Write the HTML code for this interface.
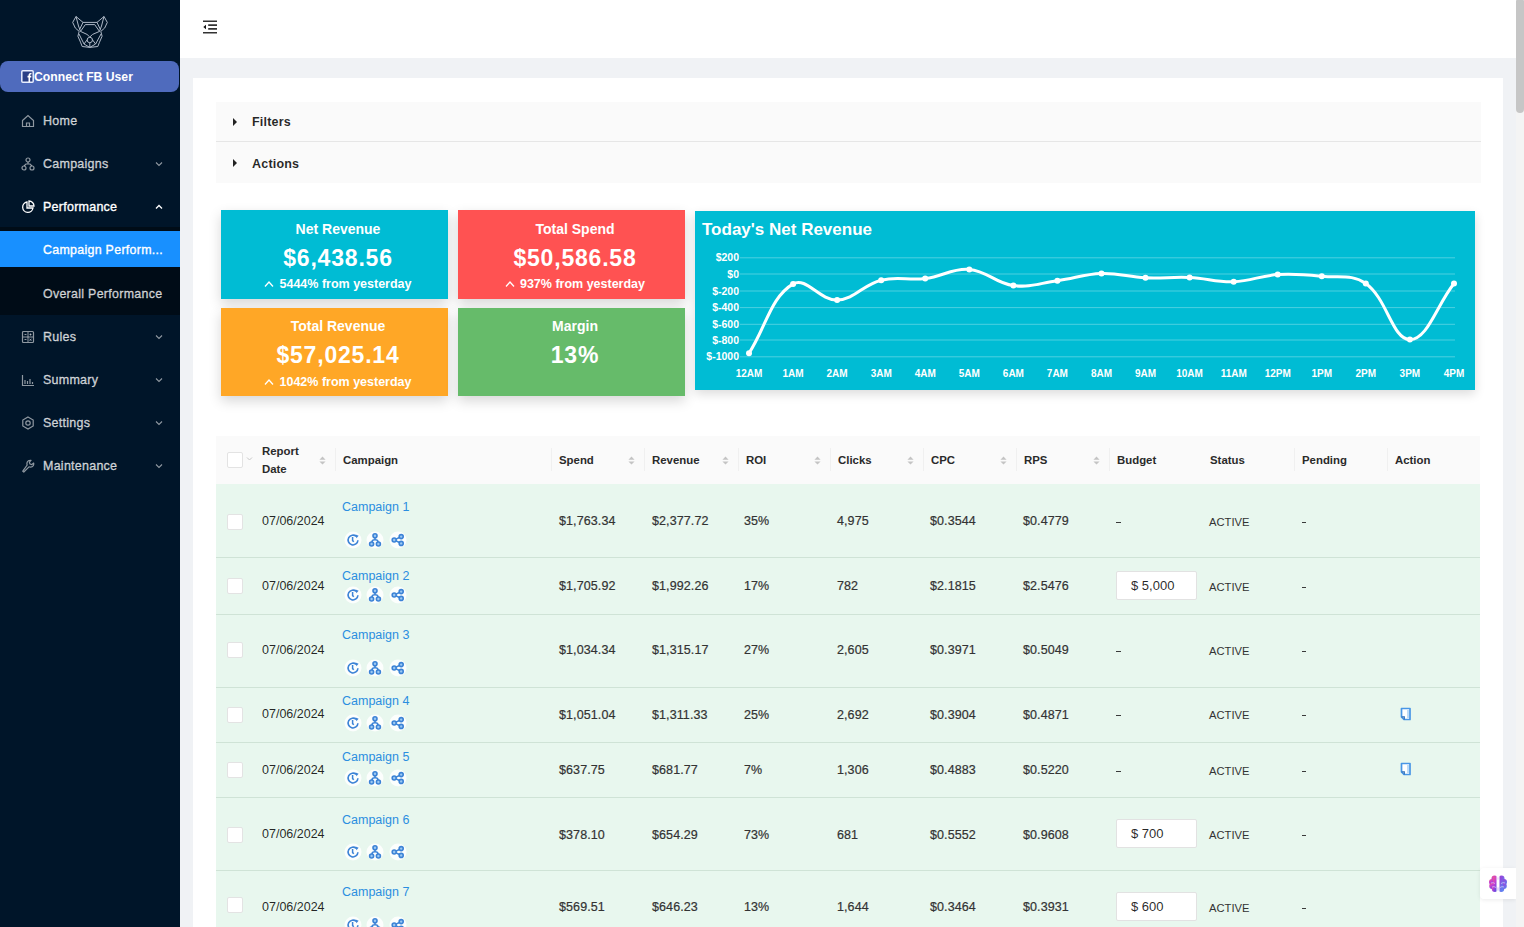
<!DOCTYPE html>
<html><head><meta charset="utf-8">
<style>
*{box-sizing:border-box;margin:0;padding:0}
html,body{width:1524px;height:927px;overflow:hidden;background:#f0f2f5;font-family:"Liberation Sans",sans-serif;color:rgba(0,0,0,.85)}
.abs{position:absolute}
#side{position:absolute;left:0;top:0;width:180px;height:927px;background:#001529}
#fb{position:absolute;left:0;top:61px;width:179px;height:31px;background:#4f6bbd;border-radius:8px;color:#fff;font-size:12.2px;font-weight:bold;line-height:33px;padding-left:21px}
.mi{position:absolute;left:0;width:180px;height:40px;line-height:42px;color:rgba(255,255,255,.72);font-size:12.5px;font-weight:normal;letter-spacing:.25px;-webkit-text-stroke:.35px currentColor}
.mi svg{-webkit-text-stroke:0}
.mi .ic,.mi .ar{opacity:.78}
.mi.on .ic,.mi.on .ar{opacity:1}
.mi .ic{position:absolute;left:21px;top:14px;width:14px;height:14px}
.mi .tx{position:absolute;left:43px}
.mi .sx{font-size:12.4px;letter-spacing:.3px}
.mi .ar{position:absolute;left:154px;top:16px;width:10px;height:10px}
#sub{position:absolute;left:0;top:227px;width:180px;height:88px;background:#000c17}
#header{position:absolute;left:180px;top:0;width:1336px;height:58px;background:#fff}
#card{position:absolute;left:193px;top:78px;width:1310px;height:849px;background:#fff}
.coll{position:absolute;left:216px;width:1265px;background:#fafafa;font-size:12.5px;font-weight:bold;letter-spacing:.2px;color:rgba(0,0,0,.85)}
.coll .tri{position:absolute;left:17px;width:0;height:0;border-left:4px solid #222;border-top:4px solid transparent;border-bottom:4px solid transparent}
.coll .t{position:absolute;left:36px}
.stat{position:absolute;color:#fff;text-align:center;box-shadow:0 5px 12px rgba(0,0,0,.16)}
.stat.r2 .h{top:10px}.stat.r2 .v{top:33.5px}
.stat .h{position:absolute;left:7px;right:0;top:11px;font-size:14px;font-weight:bold}
.stat .v{position:absolute;left:7px;right:0;top:35px;font-size:23px;line-height:26px;font-weight:bold;letter-spacing:.8px}
.stat .f{position:absolute;left:7px;right:0;top:67px;font-size:12.5px;font-weight:bold}
.cb{position:absolute;width:16px;height:16px;background:#fff;border:1px solid #e3e3e3;border-radius:2px}
.dv{position:absolute;top:448px;width:1px;height:23px;background:#f0f0f0}
.th{position:absolute;font-size:11.4px;font-weight:bold;color:#2a2a2a;line-height:16px;white-space:nowrap}
.so{position:absolute;top:455.5px;width:7px;height:9px;fill:#c4c4c4}
.td{position:absolute;font-size:12.5px;color:rgba(0,0,0,.85);line-height:15px;white-space:nowrap}
.n{color:#333;letter-spacing:.1px;-webkit-text-stroke:.2px #333}
.dash{position:absolute;width:4.5px;height:1.4px;background:#3a3a3a}
.st{font-size:11.2px;color:#333}
.lk{position:absolute;font-size:12.5px;color:#2b8ee0;line-height:15px;white-space:nowrap}
.ri{position:absolute;width:18px;height:18px}
.ai{position:absolute;width:12px;height:14px}
.inp{position:absolute;width:81px;height:29px;background:#fff;border:1px solid #e2e2e2;border-radius:2px;font-size:13px;line-height:27px;padding-left:14px;color:rgba(0,0,0,.85)}
#scroll{position:absolute;left:1516px;top:0;width:8px;height:927px;background:#f4f4f4}
#thumb{position:absolute;left:1516px;top:0;width:8px;height:113px;background:#c6c6c6;border-radius:1px 1px 4px 4px}
</style></head><body>
<svg width="0" height="0" style="position:absolute"><defs>
<symbol id="hist" viewBox="0 0 18 18"><circle cx="9" cy="9" r="8.5" fill="rgba(255,255,255,.85)"/><path d="M13.9 9.2 A4.9 4.9 0 1 1 12.3 5.4" fill="none" stroke="#3c83d6" stroke-width="1.6"/><path d="M11.6 3.6 L14.6 4.8 L12.4 7.2 Z" fill="#3c83d6"/><path d="M8.6 6 V9.6 L9.8 10.8" fill="none" stroke="#3c83d6" stroke-width="1.5"/></symbol>
<symbol id="tree" viewBox="0 0 18 18"><circle cx="9" cy="9" r="8.5" fill="rgba(255,255,255,.85)"/><g fill="#9cc8f2" stroke="#3c83d6" stroke-width="1.6"><circle cx="9" cy="4.8" r="2"/><circle cx="5.6" cy="13" r="2"/><circle cx="12.4" cy="13" r="2"/></g><path d="M9 6.8 V8.8 M6 11 Q6 8.8 9 8.8 Q12 8.8 12 11" fill="none" stroke="#3c83d6" stroke-width="1.6"/></symbol>
<symbol id="share" viewBox="0 0 18 18"><circle cx="9" cy="9" r="8.5" fill="rgba(255,255,255,.85)"/><g fill="#9cc8f2" stroke="#3c83d6" stroke-width="1.6"><circle cx="5.2" cy="9" r="2"/><circle cx="12.2" cy="5.6" r="2"/><circle cx="12.2" cy="12.4" r="2"/></g><path d="M7 8.1 L10.4 6.5 M7 9.9 L10.4 11.5" fill="none" stroke="#3c83d6" stroke-width="1.6"/></symbol>
<symbol id="copy" viewBox="0 0 12 14"><path d="M1.5 1.5 H10 V12.5 H4 L1.5 10 Z" fill="#fff" stroke="#4896e6" stroke-width="1.7" stroke-linejoin="round"/><path d="M8 3 V11" stroke="#a9d0f5" stroke-width="1.5"/><path d="M4.3 12.5 V9.8 H1.6" fill="none" stroke="#2f6fb8" stroke-width="1.2"/></symbol>
</defs></svg>
<div id="side">
  <svg class="abs" style="left:60px;top:5px" width="60" height="50" viewBox="60 5 60 50" fill="none" stroke="#aeb8c6" stroke-width="1" stroke-linejoin="round">
    <path d="M76 16.5 L72.7 22.4 L75.3 28 L79.2 31.4 L77.9 36.2 L80.5 42.2 L82.2 46.5 L89.8 47.4 L97.8 46.5 L99.5 42.2 L102.1 36.2 L100.8 31.4 L104.7 28 L107.3 22.4 L104 16.5 L97 22.4 L83 22.4 Z"/>
    <path d="M76 16.5 L78.5 26 L80.5 31.4 M104 16.5 L101.5 26 L99.5 31.4 M83 22.4 L79.6 29.5 M97 22.4 L100.4 29.5 M85.3 24.6 H94.7 M85.3 24.6 L80.5 31.4 M94.7 24.6 L99.5 31.4 M80.5 31.4 L87 34.4 L89.8 37 L92.6 34.4 L99.5 31.4 M79 34 L84 44 L89.8 47.4 L95.6 44 L101 34 M84 44 L87.3 39.6 M95.6 44 L92.3 39.6"/>
    <circle cx="89.8" cy="40" r="2.7"/><path d="M89.8 42.7 V47"/>
  </svg>
  <div id="fb"><svg width="13" height="13" viewBox="0 0 13 13" style="vertical-align:-2px;margin-right:0px"><rect x="0.8" y="0.8" width="11.4" height="11.4" rx="1" fill="#2a3f86" stroke="#e8eeff" stroke-width="1.5"/><path d="M8.3 12 V5.5 Q8.3 3.5 10.5 3.5 M6.5 6.6 H10.3" fill="none" stroke="#fff" stroke-width="1.6"/></svg>Connect FB User</div>
</div>
<div id="sub"></div>
<div class="abs" style="left:0;top:231px;width:180px;height:36px;background:#1890ff"></div>

<div class="mi" style="top:100px"><svg class="ic" viewBox="0 0 14 14" fill="none" stroke="currentColor" stroke-width="1.2"><path d="M1.5 6.5 L7 1.5 L12.5 6.5 V12.5 H1.5 Z M5.5 12.5 V9 H8.5 V12.5"/></svg><span class="tx">Home</span></div>
<div class="mi" style="top:143px"><svg class="ic" viewBox="0 0 14 14" fill="none" stroke="currentColor" stroke-width="1.2"><circle cx="7" cy="3" r="2"/><circle cx="3" cy="11" r="2"/><circle cx="11" cy="11" r="2"/><path d="M7 5 V7 M3 9 L5 7 H9 L11 9"/></svg><span class="tx">Campaigns</span><svg class="ar" viewBox="0 0 10 10" fill="none" stroke="currentColor" stroke-width="1.1"><path d="M2 3.5 L5 6.5 L8 3.5"/></svg></div>
<div class="mi on" style="top:186px;color:#fff"><svg class="ic" viewBox="0 0 14 14" fill="none" stroke="currentColor" stroke-width="1.3"><path d="M6 2 A5.2 5.2 0 1 0 12 8 H6 Z"/><path d="M8 1 A5 5 0 0 1 13 6 H8 Z"/></svg><span class="tx">Performance</span><svg class="ar" viewBox="0 0 10 10" fill="none" stroke="currentColor" stroke-width="1.3"><path d="M2 6.5 L5 3.5 L8 6.5"/></svg></div>
<div class="mi" style="top:229px;color:#fff"><span class="tx sx">Campaign Perform...</span></div>
<div class="mi" style="top:273px"><span class="tx sx">Overall Performance</span></div>
<div class="mi" style="top:316px"><svg class="ic" viewBox="0 0 14 14" fill="none" stroke="currentColor" stroke-width="1.2"><rect x="1.5" y="1.5" width="11" height="11" rx="1"/><path d="M7 2 V12 M2 7 H12 M3.5 4.5 H5.5 M8.5 4.5 H10.5 M9.5 3.5 V5.5 M3.5 9.5 H5.5 M8.5 9 L10.5 10.5 M10.5 9 L8.5 10.5" stroke-width="1"/></svg><span class="tx">Rules</span><svg class="ar" viewBox="0 0 10 10" fill="none" stroke="currentColor" stroke-width="1.1"><path d="M2 3.5 L5 6.5 L8 3.5"/></svg></div>
<div class="mi" style="top:359px"><svg class="ic" viewBox="0 0 14 14" fill="none" stroke="currentColor" stroke-width="1.2"><path d="M1.5 2 V12.5 H13 M4 11 V7 M6.5 11 V8 M9 11 V6 M11.5 11 V9"/></svg><span class="tx">Summary</span><svg class="ar" viewBox="0 0 10 10" fill="none" stroke="currentColor" stroke-width="1.1"><path d="M2 3.5 L5 6.5 L8 3.5"/></svg></div>
<div class="mi" style="top:402px"><svg class="ic" viewBox="0 0 14 14" fill="none" stroke="currentColor" stroke-width="1.2"><path d="M7 1 L12.2 4 V10 L7 13 L1.8 10 V4 Z"/><circle cx="7" cy="7" r="2.2"/></svg><span class="tx">Settings</span><svg class="ar" viewBox="0 0 10 10" fill="none" stroke="currentColor" stroke-width="1.1"><path d="M2 3.5 L5 6.5 L8 3.5"/></svg></div>
<div class="mi" style="top:445px"><svg class="ic" viewBox="0 0 14 14" fill="none" stroke="currentColor" stroke-width="1.2" stroke-linejoin="round"><path d="M1.8 12.2 L2.8 13 L8 7.8 Q10.8 8.8 12.3 6.6 Q13 5.2 12.6 4 L10.8 5.6 L9 5 L8.4 3.2 L10 1.4 Q8.8 1 7.4 1.7 Q5.2 3.2 6.2 6 Z"/></svg><span class="tx">Maintenance</span><svg class="ar" viewBox="0 0 10 10" fill="none" stroke="currentColor" stroke-width="1.1"><path d="M2 3.5 L5 6.5 L8 3.5"/></svg></div>

<div id="header">
  <svg class="abs" style="left:22px;top:20px" width="16" height="15" viewBox="0 0 16 15"><path d="M1 1.3 H15 M6.2 5.1 H15 M6.2 8.9 H15 M1 12.8 H15" stroke="#333" stroke-width="1.6"/><path d="M1.3 7 L4 4.8 V9.2 Z" fill="#111"/></svg>
</div>
<div id="card"></div>

<div class="coll" style="top:102px;height:40px;border-bottom:1px solid #e6e6e6"><i class="tri" style="top:16px"></i><span class="t" style="top:13px">Filters</span></div>
<div class="coll" style="top:142px;height:41px"><i class="tri" style="top:17px"></i><span class="t" style="top:15px">Actions</span></div>

<div class="stat" style="left:221px;top:210px;width:227px;height:89px;background:#00bcd4"><div class="h">Net Revenue</div><div class="v">$6,438.56</div><div class="f"><svg width="10" height="8" viewBox="0 0 10 8" style="margin-right:5px;vertical-align:0px" fill="none" stroke="#fff" stroke-width="1.3"><path d="M1 6.5 L5 2 L9 6.5"/></svg>5444% from yesterday</div></div>
<div class="stat" style="left:458px;top:210px;width:227px;height:89px;background:#ff5252"><div class="h">Total Spend</div><div class="v">$50,586.58</div><div class="f"><svg width="10" height="8" viewBox="0 0 10 8" style="margin-right:5px;vertical-align:0px" fill="none" stroke="#fff" stroke-width="1.3"><path d="M1 6.5 L5 2 L9 6.5"/></svg>937% from yesterday</div></div>
<div class="stat r2" style="left:221px;top:308px;width:227px;height:88px;background:#ffa726"><div class="h">Total Revenue</div><div class="v">$57,025.14</div><div class="f"><svg width="10" height="8" viewBox="0 0 10 8" style="margin-right:5px;vertical-align:0px" fill="none" stroke="#fff" stroke-width="1.3"><path d="M1 6.5 L5 2 L9 6.5"/></svg>1042% from yesterday</div></div>
<div class="stat r2" style="left:458px;top:308px;width:227px;height:88px;background:#66bb6a"><div class="h">Margin</div><div class="v">13%</div></div>

<div class="abs" style="left:695px;top:211px;width:780px;height:179px;background:#00bcd4;box-shadow:0 4px 10px rgba(0,0,0,.14)"></div>
<svg class="abs" style="left:0;top:0" width="1524" height="927" viewBox="0 0 1524 927">
  <text x="702" y="235" fill="#fff" font-size="17" font-weight="bold" font-family="Liberation Sans">Today's Net Revenue</text>
  <g stroke="rgba(255,255,255,.3)" stroke-width="1">
    <path d="M740 257.8 H1455 M740 274 H1455 M740 291 H1455 M740 307.6 H1455 M740 324.3 H1455 M740 340 H1455 M740 356.8 H1455"/>
  </g>
  <g fill="#fff" font-size="10.5" font-weight="bold" font-family="Liberation Sans" text-anchor="end">
    <text x="739" y="261">$200</text><text x="739" y="277.5">$0</text><text x="739" y="294.5">$-200</text><text x="739" y="311">$-400</text><text x="739" y="328">$-600</text><text x="739" y="343.5">$-800</text><text x="739" y="360">$-1000</text>
  </g>
  <g fill="#fff" font-size="10" font-weight="bold" font-family="Liberation Sans" text-anchor="middle">
    <text x="749" y="377">12AM</text><text x="793.1" y="377">1AM</text><text x="837.1" y="377">2AM</text><text x="881.2" y="377">3AM</text><text x="925.2" y="377">4AM</text><text x="969.3" y="377">5AM</text><text x="1013.4" y="377">6AM</text><text x="1057.4" y="377">7AM</text><text x="1101.5" y="377">8AM</text><text x="1145.5" y="377">9AM</text><text x="1189.6" y="377">10AM</text><text x="1233.7" y="377">11AM</text><text x="1277.7" y="377">12PM</text><text x="1321.8" y="377">1PM</text><text x="1365.8" y="377">2PM</text><text x="1409.9" y="377">3PM</text><text x="1454" y="377">4PM</text>
  </g>
  <path fill="none" stroke="#fff" stroke-width="3" d="M749.0 353.3 C766.6 325.5 770.6 297.5 793.1 283.9 C805.9 276.2 819.8 300.7 837.1 300.0 C855.0 299.2 862.8 284.7 881.2 280.2 C898.0 276.1 907.8 280.7 925.2 278.6 C943.0 276.4 952.0 268.0 969.3 269.4 C987.3 270.8 995.2 283.3 1013.4 285.6 C1030.5 287.8 1039.9 283.1 1057.4 280.7 C1075.1 278.3 1083.8 274.1 1101.5 273.5 C1119.0 272.9 1127.9 277.0 1145.5 277.8 C1163.1 278.6 1172.0 276.7 1189.6 277.5 C1207.3 278.3 1216.1 282.3 1233.7 281.7 C1251.4 281.1 1260.0 275.7 1277.7 274.6 C1295.2 273.5 1304.3 274.5 1321.8 276.3 C1339.5 278.1 1352.3 273.8 1365.8 283.5 C1387.5 299.1 1392.3 339.6 1409.9 339.6 C1427.5 339.6 1436.3 305.9 1454.0 283.5"/>
  <g fill="#fff"><circle cx="749.0" cy="353.3" r="3"/><circle cx="793.1" cy="283.9" r="3"/><circle cx="837.1" cy="300.0" r="3"/><circle cx="881.2" cy="280.2" r="3"/><circle cx="925.2" cy="278.6" r="3"/><circle cx="969.3" cy="269.4" r="3"/><circle cx="1013.4" cy="285.6" r="3"/><circle cx="1057.4" cy="280.7" r="3"/><circle cx="1101.5" cy="273.5" r="3"/><circle cx="1145.5" cy="277.8" r="3"/><circle cx="1189.6" cy="277.5" r="3"/><circle cx="1233.7" cy="281.7" r="3"/><circle cx="1277.7" cy="274.6" r="3"/><circle cx="1321.8" cy="276.3" r="3"/><circle cx="1365.8" cy="283.5" r="3"/><circle cx="1409.9" cy="339.6" r="3"/><circle cx="1454.0" cy="283.5" r="3"/></g>
</svg>

<!--TABLE-->
<div class="abs" style="left:216px;top:436px;width:1264px;height:48px;background:#fafafa"></div>
<div class="cb" style="left:227px;top:452px"></div>
<svg class="abs" style="left:246px;top:456px" width="7" height="6" viewBox="0 0 7 6" fill="none" stroke="#c8c8c8" stroke-width="1"><path d="M1 1.5 L3.5 4 L6 1.5"/></svg>
<div class="th" style="left:262px;top:443px;line-height:17.5px">Report<br>Date</div>
<svg class="so" style="left:318.5px" viewBox="0 0 8 10"><path d="M4 0.5 L7.5 4 H0.5 Z M4 9.5 L7.5 6 H0.5 Z"/></svg>
<div class="dv" style="left:335px"></div>
<div class="th" style="left:343px;top:451.5px">Campaign</div>
<div class="dv" style="left:551px"></div>
<div class="th" style="left:559px;top:451.5px">Spend</div>
<svg class="so" style="left:627.5px" viewBox="0 0 8 10"><path d="M4 0.5 L7.5 4 H0.5 Z M4 9.5 L7.5 6 H0.5 Z"/></svg>
<div class="dv" style="left:644px"></div>
<div class="th" style="left:652px;top:451.5px">Revenue</div>
<svg class="so" style="left:721.5px" viewBox="0 0 8 10"><path d="M4 0.5 L7.5 4 H0.5 Z M4 9.5 L7.5 6 H0.5 Z"/></svg>
<div class="dv" style="left:738px"></div>
<div class="th" style="left:746px;top:451.5px">ROI</div>
<svg class="so" style="left:813.5px" viewBox="0 0 8 10"><path d="M4 0.5 L7.5 4 H0.5 Z M4 9.5 L7.5 6 H0.5 Z"/></svg>
<div class="dv" style="left:830px"></div>
<div class="th" style="left:838px;top:451.5px">Clicks</div>
<svg class="so" style="left:906.5px" viewBox="0 0 8 10"><path d="M4 0.5 L7.5 4 H0.5 Z M4 9.5 L7.5 6 H0.5 Z"/></svg>
<div class="dv" style="left:923px"></div>
<div class="th" style="left:931px;top:451.5px">CPC</div>
<svg class="so" style="left:999.5px" viewBox="0 0 8 10"><path d="M4 0.5 L7.5 4 H0.5 Z M4 9.5 L7.5 6 H0.5 Z"/></svg>
<div class="dv" style="left:1016px"></div>
<div class="th" style="left:1024px;top:451.5px">RPS</div>
<svg class="so" style="left:1092.5px" viewBox="0 0 8 10"><path d="M4 0.5 L7.5 4 H0.5 Z M4 9.5 L7.5 6 H0.5 Z"/></svg>
<div class="dv" style="left:1109px"></div>
<div class="th" style="left:1117px;top:451.5px">Budget</div>
<div class="th" style="left:1210px;top:451.5px">Status</div>
<div class="dv" style="left:1294px"></div>
<div class="th" style="left:1302px;top:451.5px">Pending</div>
<div class="dv" style="left:1387px"></div>
<div class="th" style="left:1395px;top:451.5px">Action</div>
<div class="abs" style="left:216px;top:484px;width:1264px;height:74px;background:#e8f7ee;border-bottom:1px solid #cfe3d6"></div>
<div class="cb" style="left:227px;top:514px"></div>
<div class="td" style="left:262px;top:513.5px">07/06/2024</div>
<div class="lk" style="left:342px;top:499.5px">Campaign 1</div>
<svg class="ri" style="left:343.8px;top:531.0px"><use href="#hist"/></svg>
<svg class="ri" style="left:366.4px;top:531.0px"><use href="#tree"/></svg>
<svg class="ri" style="left:388.9px;top:531.0px"><use href="#share"/></svg>
<div class="td n" style="left:559px;top:514.2px">$1,763.34</div>
<div class="td n" style="left:652px;top:514.2px">$2,377.72</div>
<div class="td n" style="left:744px;top:514.2px">35%</div>
<div class="td n" style="left:837px;top:514.2px">4,975</div>
<div class="td n" style="left:930px;top:514.2px">$0.3544</div>
<div class="td n" style="left:1023px;top:514.2px">$0.4779</div>
<div class="dash" style="left:1116px;top:521.5px"></div>
<div class="td st" style="left:1209px;top:514.5px">ACTIVE</div>
<div class="dash" style="left:1301.5px;top:521.5px"></div>
<div class="abs" style="left:216px;top:558px;width:1264px;height:57px;background:#e8f7ee;border-bottom:1px solid #cfe3d6"></div>
<div class="cb" style="left:227px;top:578px"></div>
<div class="td" style="left:262px;top:578.5px">07/06/2024</div>
<div class="lk" style="left:342px;top:568.5px">Campaign 2</div>
<svg class="ri" style="left:343.8px;top:586.0px"><use href="#hist"/></svg>
<svg class="ri" style="left:366.4px;top:586.0px"><use href="#tree"/></svg>
<svg class="ri" style="left:388.9px;top:586.0px"><use href="#share"/></svg>
<div class="td n" style="left:559px;top:579.2px">$1,705.92</div>
<div class="td n" style="left:652px;top:579.2px">$1,992.26</div>
<div class="td n" style="left:744px;top:579.2px">17%</div>
<div class="td n" style="left:837px;top:579.2px">782</div>
<div class="td n" style="left:930px;top:579.2px">$2.1815</div>
<div class="td n" style="left:1023px;top:579.2px">$2.5476</div>
<div class="inp" style="left:1116px;top:570.5px">$ 5,000</div>
<div class="td st" style="left:1209px;top:579.5px">ACTIVE</div>
<div class="dash" style="left:1301.5px;top:586.5px"></div>
<div class="abs" style="left:216px;top:615px;width:1264px;height:73px;background:#e8f7ee;border-bottom:1px solid #cfe3d6"></div>
<div class="cb" style="left:227px;top:642px"></div>
<div class="td" style="left:262px;top:642.5px">07/06/2024</div>
<div class="lk" style="left:342px;top:627.5px">Campaign 3</div>
<svg class="ri" style="left:343.8px;top:659.0px"><use href="#hist"/></svg>
<svg class="ri" style="left:366.4px;top:659.0px"><use href="#tree"/></svg>
<svg class="ri" style="left:388.9px;top:659.0px"><use href="#share"/></svg>
<div class="td n" style="left:559px;top:643.2px">$1,034.34</div>
<div class="td n" style="left:652px;top:643.2px">$1,315.17</div>
<div class="td n" style="left:744px;top:643.2px">27%</div>
<div class="td n" style="left:837px;top:643.2px">2,605</div>
<div class="td n" style="left:930px;top:643.2px">$0.3971</div>
<div class="td n" style="left:1023px;top:643.2px">$0.5049</div>
<div class="dash" style="left:1116px;top:650.5px"></div>
<div class="td st" style="left:1209px;top:643.5px">ACTIVE</div>
<div class="dash" style="left:1301.5px;top:650.5px"></div>
<div class="abs" style="left:216px;top:688px;width:1264px;height:55px;background:#e8f7ee;border-bottom:1px solid #cfe3d6"></div>
<div class="cb" style="left:227px;top:707px"></div>
<div class="td" style="left:262px;top:707.0px">07/06/2024</div>
<div class="lk" style="left:342px;top:693.5px">Campaign 4</div>
<svg class="ri" style="left:343.8px;top:714.0px"><use href="#hist"/></svg>
<svg class="ri" style="left:366.4px;top:714.0px"><use href="#tree"/></svg>
<svg class="ri" style="left:388.9px;top:714.0px"><use href="#share"/></svg>
<div class="td n" style="left:559px;top:707.7px">$1,051.04</div>
<div class="td n" style="left:652px;top:707.7px">$1,311.33</div>
<div class="td n" style="left:744px;top:707.7px">25%</div>
<div class="td n" style="left:837px;top:707.7px">2,692</div>
<div class="td n" style="left:930px;top:707.7px">$0.3904</div>
<div class="td n" style="left:1023px;top:707.7px">$0.4871</div>
<div class="dash" style="left:1116px;top:715.0px"></div>
<div class="td st" style="left:1209px;top:708.0px">ACTIVE</div>
<div class="dash" style="left:1301.5px;top:715.0px"></div>
<svg class="ai" style="left:1399.5px;top:706.5px"><use href="#copy"/></svg>
<div class="abs" style="left:216px;top:743px;width:1264px;height:55px;background:#e8f7ee;border-bottom:1px solid #cfe3d6"></div>
<div class="cb" style="left:227px;top:762px"></div>
<div class="td" style="left:262px;top:762.5px">07/06/2024</div>
<div class="lk" style="left:342px;top:749.5px">Campaign 5</div>
<svg class="ri" style="left:343.8px;top:769.0px"><use href="#hist"/></svg>
<svg class="ri" style="left:366.4px;top:769.0px"><use href="#tree"/></svg>
<svg class="ri" style="left:388.9px;top:769.0px"><use href="#share"/></svg>
<div class="td n" style="left:559px;top:763.2px">$637.75</div>
<div class="td n" style="left:652px;top:763.2px">$681.77</div>
<div class="td n" style="left:744px;top:763.2px">7%</div>
<div class="td n" style="left:837px;top:763.2px">1,306</div>
<div class="td n" style="left:930px;top:763.2px">$0.4883</div>
<div class="td n" style="left:1023px;top:763.2px">$0.5220</div>
<div class="dash" style="left:1116px;top:770.5px"></div>
<div class="td st" style="left:1209px;top:763.5px">ACTIVE</div>
<div class="dash" style="left:1301.5px;top:770.5px"></div>
<svg class="ai" style="left:1399.5px;top:762.0px"><use href="#copy"/></svg>
<div class="abs" style="left:216px;top:798px;width:1264px;height:73px;background:#e8f7ee;border-bottom:1px solid #cfe3d6"></div>
<div class="cb" style="left:227px;top:827px"></div>
<div class="td" style="left:262px;top:827.0px">07/06/2024</div>
<div class="lk" style="left:342px;top:812.5px">Campaign 6</div>
<svg class="ri" style="left:343.8px;top:843.0px"><use href="#hist"/></svg>
<svg class="ri" style="left:366.4px;top:843.0px"><use href="#tree"/></svg>
<svg class="ri" style="left:388.9px;top:843.0px"><use href="#share"/></svg>
<div class="td n" style="left:559px;top:827.7px">$378.10</div>
<div class="td n" style="left:652px;top:827.7px">$654.29</div>
<div class="td n" style="left:744px;top:827.7px">73%</div>
<div class="td n" style="left:837px;top:827.7px">681</div>
<div class="td n" style="left:930px;top:827.7px">$0.5552</div>
<div class="td n" style="left:1023px;top:827.7px">$0.9608</div>
<div class="inp" style="left:1116px;top:819.0px">$ 700</div>
<div class="td st" style="left:1209px;top:828.0px">ACTIVE</div>
<div class="dash" style="left:1301.5px;top:835.0px"></div>
<div class="abs" style="left:216px;top:871px;width:1264px;height:73px;background:#e8f7ee;border-bottom:1px solid #cfe3d6"></div>
<div class="cb" style="left:227px;top:897px"></div>
<div class="td" style="left:262px;top:899.5px">07/06/2024</div>
<div class="lk" style="left:342px;top:884.5px">Campaign 7</div>
<svg class="ri" style="left:343.8px;top:916.0px"><use href="#hist"/></svg>
<svg class="ri" style="left:366.4px;top:916.0px"><use href="#tree"/></svg>
<svg class="ri" style="left:388.9px;top:916.0px"><use href="#share"/></svg>
<div class="td n" style="left:559px;top:900.2px">$569.51</div>
<div class="td n" style="left:652px;top:900.2px">$646.23</div>
<div class="td n" style="left:744px;top:900.2px">13%</div>
<div class="td n" style="left:837px;top:900.2px">1,644</div>
<div class="td n" style="left:930px;top:900.2px">$0.3464</div>
<div class="td n" style="left:1023px;top:900.2px">$0.3931</div>
<div class="inp" style="left:1116px;top:891.5px">$ 600</div>
<div class="td st" style="left:1209px;top:900.5px">ACTIVE</div>
<div class="dash" style="left:1301.5px;top:907.5px"></div>
<!--/TABLE-->
<div class="abs" style="left:1480px;top:868px;width:36px;height:31px;background:#fff;border-radius:4px 0 0 4px;box-shadow:0 1px 4px rgba(0,0,0,.08)"></div>
<svg class="abs" style="left:1488px;top:875px" width="20" height="18" viewBox="0 0 20 18"><defs><linearGradient id="bg1" x1="0" y1="0" x2="0.6" y2="1"><stop offset="0" stop-color="#f25a84"/><stop offset=".45" stop-color="#c83fd0"/><stop offset="1" stop-color="#6a4ae0"/></linearGradient><linearGradient id="bg2" x1="0.3" y1="0" x2="0.8" y2="1"><stop offset="0" stop-color="#9a3fd8"/><stop offset="1" stop-color="#5a86f2"/></linearGradient></defs>
<g fill="url(#bg1)"><circle cx="6.5" cy="3.6" r="3"/><circle cx="4" cy="7" r="3"/><circle cx="4.2" cy="11" r="3"/><circle cx="6.8" cy="14" r="3"/><rect x="5" y="2" width="4" height="14"/></g>
<g fill="url(#bg2)"><circle cx="13.5" cy="3.6" r="3"/><circle cx="16" cy="7" r="3"/><circle cx="15.8" cy="11" r="3"/><circle cx="13.2" cy="14" r="3"/><rect x="11" y="2" width="4" height="14"/></g>
<path d="M9.1 1 V17.5 M10.9 1 V17.5" stroke="#fff" stroke-width="1.2"/><path d="M3 8 Q5 7 7 8.5 M4 12 Q6 11 8 12.5 M13 8.5 Q15 7 17 8 M12 12.5 Q14 11 16 12" stroke="rgba(255,255,255,.55)" stroke-width=".9" fill="none"/></svg>
<div id="scroll"></div><div id="thumb"></div>
</body></html>
